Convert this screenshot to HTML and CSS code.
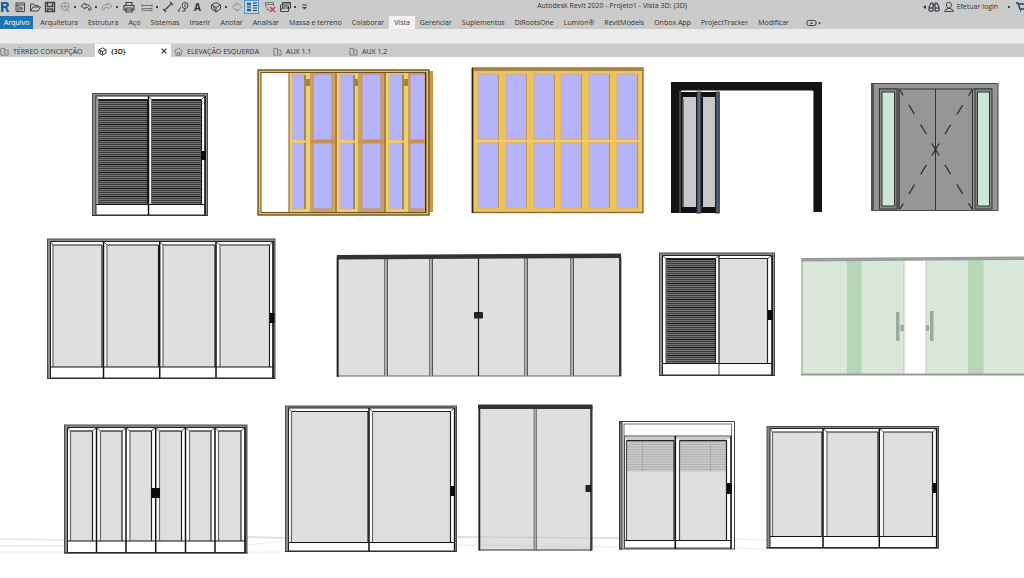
FILE: index.html
```html
<!DOCTYPE html>
<html lang="pt-BR">
<head>
    <meta charset="UTF-8">
    <meta name="viewport" content="width=device-width, initial-scale=1.0">
    <title>Autodesk Revit 2020 - Projeto1</title>
    <link rel="stylesheet" href="styles.css">
</head>
<body>
    <header class="titlebar">
        <div class="quick">
            <svg class="logo" viewBox="0 0 10 12"><path d="M1 1h5q3 0 3 3 0 2-2 2.500L9.500 11H7L5 7H3.500v4H1zM3.500 3v2H6q1-1 0-2z" fill="#1c5f9c"/></svg>
            <button class="tool" aria-label="Início"><svg viewBox="0 0 12 12"><path d="M2 2h8.500v8.500H2zM2 4h8.500M4 4v6M6 6l3 1.500L6 9z"/></svg></button>
            <button class="tool" aria-label="Abrir"><svg viewBox="0 0 12 12"><path d="M1.500 10V3h3l1 1.500H9V6M1.500 10L4 6h7.500L9 10z"/></svg></button>
            <button class="tool" aria-label="Salvar"><svg viewBox="0 0 12 12"><path d="M1.500 1.500h9v9h-9zM3.500 1.500v4h5v-4M3.500 10.500V8h5v2.500" stroke-width="1.400"/></svg></button>
            <button class="tool off" aria-label="Sincronizar"><svg viewBox="0 0 12 12"><circle cx="6" cy="5.500" r="4"/><path d="M2 5.500h8M6 2v4l4 5"/></svg></button>
            <button class="more" aria-label="Opções de sincronizar"></button>
            <button class="tool" aria-label="Desfazer"><svg viewBox="0 0 12 12"><path d="M5 2L1 5l4 3V6.500q4-1 4 3l2-1q0-5-6-5z"/></svg></button>
            <button class="more" aria-label="Lista desfazer"></button>
            <button class="tool off" aria-label="Refazer"><svg viewBox="0 0 12 12"><path d="M7 2l4 3-4 3V6.500q-4-1-4 3l-2-1q0-5 6-5z"/></svg></button>
            <button class="more" aria-label="Lista refazer"></button>
            <button class="tool print" aria-label="Imprimir"><svg viewBox="0 0 12 12"><path d="M3 4V1.500h6V4M1 4.500h10V9H1zM3 7h6v4H3z" stroke-width="1.200"/></svg></button>
            <span class="sep"></span>
            <button class="tool" aria-label="Medir"><svg viewBox="0 0 12 12"><path d="M1 3v3M11 3v3M1 4.500h10M1 7.500h10v2H1z" stroke="#777"/></svg></button>
            <button class="more" aria-label="Opções de medir"></button>
            <button class="tool" aria-label="Cota alinhada"><svg viewBox="0 0 12 12"><path d="M2.500 9.500l7-7M1 8l3 3M8 1l3 3" stroke-width="1.300"/></svg></button>
            <button class="tool" aria-label="Identificador"><svg viewBox="0 0 12 12"><circle cx="8" cy="4.500" r="3"/><path d="M1 10l3-4M8 3v3M8 7.500V10H5M1 10h2"/></svg></button>
            <button class="tool letter" aria-label="Texto">A</button>
            <span class="sep"></span>
            <button class="tool" aria-label="Vista 3D"><svg viewBox="0 0 12 12"><path d="M1.500 4L6 1.500 10.500 4v4L6 11 1.500 8zM1.500 4L6 6.500 10.500 4M6 6.500V11M4 5.500V8l2 2"/></svg></button>
            <button class="more" aria-label="Opções de vista"></button>
            <button class="tool off" aria-label="Corte"><svg viewBox="0 0 12 12"><path d="M6 1.500L10.500 6 6 10.500V8a2.500 2.500 0 1 1 0-4z"/></svg></button>
            <button class="tool on" aria-label="Linhas finas"><svg viewBox="0 0 12 12"><path d="M1 3h4M1 9h4" stroke="#245b96" stroke-width="2.500"/><path d="M7 2h4M7 4.500h4M7 7h4M7 9.500h4M1 6h4" stroke="#333"/></svg></button>
            <span class="sep"></span>
            <button class="tool" aria-label="Fechar janelas ocultas"><svg viewBox="0 0 12 12"><path d="M1.500 6V1.500h8V5M1.500 3.500h8M3 6v3h3" stroke="#777"/><path d="M6 6l5 5M11 6l-5 5" stroke="#cf3448" stroke-width="1.400"/></svg></button>
            <button class="tool" aria-label="Trocar janelas"><svg viewBox="0 0 12 12"><path d="M1.500 8V4h2V1.500h8V7H9.500M3.500 5h6v5.500h-8V8h2zM3.500 7h6M3.500 3h8"/></svg></button>
            <button class="more" aria-label="Opções de janelas"></button>
            <button class="tool" aria-label="Personalizar"><svg viewBox="0 0 12 12"><path d="M2 4h5"/><path d="M2 6h5L4.500 8.500z" fill="#444" stroke="none"/></svg></button>
        </div>
        <div class="title">Autodesk Revit 2020 - Projeto1 - Vista 3D: {3D}</div>
        <div class="account">
            <button class="tool small" aria-label="Recolher"><svg viewBox="0 0 4 12"><path d="M4 4v4L1 6z" fill="#333" stroke="none"/></svg></button>
            <button class="tool" aria-label="Localizar"><svg viewBox="0 0 12 12"><path d="M1 10V6l2-4h2v8zM11 10V6L9 2H7v8zM5 4h2M1 7h4M7 7h4" stroke="#223"/></svg></button>
            <a class="login" href="#"><svg viewBox="0 0 12 12"><path d="M6 1.500q2.500 0 2.500 2.500T6 7 3.500 4 6 1.500M1.500 10.500Q2 8 5 7.500h2q3 .5 3.500 3z"/></svg>Efetuar login</a>
            <button class="more" aria-label="Opções de login"></button>
            <button class="cart" aria-label="Loja"><svg viewBox="0 0 12 12"><path d="M0 2h2l2 6h7l1-5H3M4 10h1M9 10h1" stroke="#27406e" stroke-width="1.400"/></svg></button>
        </div>
    </header>

    <nav class="ribbon">
        <a class="file" href="#">Arquivo</a>
        <a href="#">Arquitetura</a>
        <a href="#">Estrutura</a>
        <a href="#">Aço</a>
        <a href="#">Sistemas</a>
        <a href="#">Inserir</a>
        <a href="#">Anotar</a>
        <a href="#">Analisar</a>
        <a href="#">Massa e terreno</a>
        <a href="#">Colaborar</a>
        <a class="current" href="#">Vista</a>
        <a href="#">Gerenciar</a>
        <a href="#">Suplementos</a>
        <a href="#">DiRootsOne</a>
        <a href="#">Lumion®</a>
        <a href="#">RevitModels</a>
        <a href="#">Onbox App</a>
        <a href="#">ProjectTracker</a>
        <a href="#">Modificar</a>
        <button class="toggle" aria-label="Minimizar faixa"><svg viewBox="0 0 16 8"><rect x="1" y="1.500" width="9" height="5" rx="1.500"/><path d="M4 5l1.500-2L7 5z" fill="#444" stroke="none"/><path d="M12 3.500h3L13.500 5.500z" fill="#333" stroke="none"/></svg></button>
    </nav>
    <div class="panel"></div>

    <div class="views">
        <a class="view wide" href="#"><svg viewBox="0 0 10 10"><path d="M1 1.500h4v2h4V9H1zM5 3.500V7h2"/></svg>TÉRREO CONCEPÇÃO</a>
        <div class="view active"><svg viewBox="0 0 10 10"><path d="M1 3l4-2 4 2v4L5 9 1 7zM1 3l4 2 4-2M5 5v4M3 4v3"/></svg>{3D}<button class="close" aria-label="Fechar"><svg viewBox="0 0 10 10"><path d="M2 2l6 6M8 2L2 8"/></svg></button></div>
        <a class="view wide" href="#"><svg viewBox="0 0 10 10"><path d="M0 5l5-4 5 4M2 5v4h6V5M4 9V6h2v3"/></svg>ELEVAÇÃO ESQUERDA</a>
        <a class="view" href="#"><svg viewBox="0 0 10 10"><path d="M1 1.500h4v2h4V9H1zM5 3.500V7h2"/></svg>AUX 1.1</a>
        <a class="view" href="#"><svg viewBox="0 0 10 10"><path d="M1 1.500h4v2h4V9H1zM5 3.500V7h2"/></svg>AUX 1.2</a>
    </div>

    <main>
        <svg id="model" class="model" viewBox="0 57 1024 521" role="img" aria-label="Vista 3D das portas e janelas"></svg>
    </main>
    <script src="script.js"></script>
</body>
</html>
```

FILE: styles.css
```css
* {
    box-sizing: border-box;
}
body {
    margin: 0;
    background: #fff;
    color: #333;
    font: 7px/10px 'Open Sans', 'Noto Sans', sans-serif;
}
a {
    color: inherit;
    text-decoration: none;
}
button {
    border: 0;
    padding: 0;
    background: none;
}
svg {
    display: block;
    fill: none;
    stroke: #444;
}
.titlebar {
    display: flex;
    height: 16px;
    background: #cbcbcb;
    overflow: hidden;
}
.quick, .account {
    display: flex;
    flex: none;
    align-items: center;
    height: 14px;
}
.logo {
    width: 10px;
    height: 12px;
    margin-right: 2px;
    stroke: none;
}
.tool {
    display: flex;
    justify-content: center;
    width: 15px;
}
.tool svg, .login svg {
    width: 12px;
    height: 12px;
}
.letter {
    color: #333;
    font: bold 10px/14px 'Open Sans', sans-serif;
}
.off {
    opacity: 0.4;
}
.on {
    background: #b9d8f2;
    outline: 1px solid #4f96cf;
    outline-offset: -1px;
    padding: 1px 0;
}
.print {
    margin-left: 1px;
}
.small {
    width: 5px;
}
.tool.small svg {
    width: 4px;
}
.more {
    width: 6px;
    height: 10px;
}
.more::before {
    content: "";
    display: block;
    width: 2px;
    height: 2px;
    margin: auto;
    background: #444;
}
.sep {
    width: 3px;
}
.title {
    flex: 1;
    padding: 1px 10px 0 0;
    text-align: center;
    white-space: nowrap;
}
.login {
    display: flex;
    align-items: center;
    gap: 2px;
    margin: 0 8px 0 1px;
}
.cart {
    width: 12px;
    margin: 0 -4px 0 4px;
}
.ribbon {
    display: flex;
    height: 13px;
    background: #cbcbcb;
    line-height: 14px;
    white-space: nowrap;
}
.ribbon a {
    padding: 0 5px;
}
.ribbon .file {
    margin-right: 2px;
    padding: 0 4px;
    background: #1f74ad;
    color: #fff;
}
.ribbon .current {
    background: #f2f2f2;
}
.toggle {
    margin-left: 12px;
}
.toggle svg {
    width: 16px;
    height: 8px;
}
.panel {
    height: 15px;
    background: #ececec;
    border-bottom: 1px solid #dcdcdc;
}
.views {
    display: flex;
    height: 13px;
    background: #cbcbcb;
    line-height: 13px;
}
.view {
    display: flex;
    align-items: center;
    gap: 4px;
    width: 76px;
    padding: 1px 3px 0;
    white-space: nowrap;
}
.view svg {
    width: 9px;
    height: 9px;
    stroke: #777;
}
.wide {
    width: 99px;
}
.wide:first-child {
    width: 95px;
    padding-left: 0;
}
.active {
    background: #fff;
    color: #111;
    font-weight: 600;
}
.active svg {
    stroke: #333;
}
.view .close {
    margin-left: auto;
}
.close svg {
    width: 8px;
    height: 8px;
    stroke-width: 1.5;
}
.model {
    width: 100%;
    height: auto;
    stroke: none;
}
```

FILE: script.js
```js
const model = document.getElementById('model');
let out = '';

function rect(x1, y1, x2, y2, fill, stroke, width) {
    out += `<rect x="${x1}" y="${y1}" width="${x2 - x1}" height="${y2 - y1}" fill="${fill}"`;
    if (stroke) out += ` stroke="${stroke}" stroke-width="${width || 1}"`;
    out += '/>';
}
function line(x1, y1, x2, y2, color, width, dash) {
    out += `<line x1="${x1}" y1="${y1}" x2="${x2}" y2="${y2}" stroke="${color || '#222'}" stroke-width="${width || 1}"`;
    if (dash) out += ` stroke-dasharray="${dash}"`;
    out += '/>';
}

// horizontal slats of the shutters
function slats(x1, y1, x2, y2) {
    rect(x1, y1, x2, y2, '#757575');
    let i = 0;
    for (let y = y1 + 1; y < y2; y += 2) {
        line(x1, y, x2, y, i % 4 === 0 ? '#141414' : '#3c3c3c', 1);
        i++;
    }
}

// sliding door with aluminium frame, panes = [left, right, isShutter]
function sliding(d) {
    const { x1, y1, x2, y2, left, top, right, rail, paneTop } = d;
    rect(x1 + 0.5, y1 + 0.5, x2 - 0.5, y2 - 0.5, '#8c8c8c', '#4a4a4a');
    rect(left, top, right, y2 - 1, '#fff', '#222');
    d.panes.forEach((p, i) => {
        const a = i ? d.div[i - 1] : left;
        const b = i < d.div.length ? d.div[i] : right;
        line(a, top, p[0], paneTop, '#555');
        if (b - p[1] > 2) line(b, top, p[1], paneTop, '#555');
        if (p[2]) slats(p[0], paneTop, p[1], rail);
        else rect(p[0], paneTop, p[1], rail, '#dfdfe1');
        line(p[0], paneTop, p[1], paneTop, '#222', 1.2);
        line(p[0], paneTop, p[0], rail, '#666', 1.2);
        line(p[1], paneTop, p[1], rail, '#222', 1.2);
    });
    line(left, rail, right, rail, '#111', 1.2);
    d.div.forEach(x => line(x, top, x, y2 - 1, '#111', d.divWidth || 1.5));
    line(right, top, right, y2 - 1, '#111', 1.3);
    line(x1, y2 - 0.5, x2, y2 - 0.5, '#333');
    rect(...d.handle, '#0a0a0a');
}

// shadows on the floor
line(0, 539, 64, 540, '#e9e9e9', 2);
line(0, 546, 64, 546, '#f0f0f0', 2);
line(0, 552, 64, 552, '#f4f4f4', 2);
line(247, 537, 285, 538, '#e2e2e2', 2);
line(247, 545, 285, 541, '#eeeeee');
line(247, 552, 285, 552, '#f0f0f0');
line(456, 537, 619, 538, '#dedede', 2);
line(456, 545, 619, 547, '#e6e6e6');
line(735, 539, 767, 540, '#eeeeee');
line(735, 548, 767, 549, '#f0f0f0');

// row 1: shutter door
sliding({ x1: 92, y1: 93, x2: 208, y2: 216, left: 96, top: 96, right: 205, rail: 204.5, paneTop: 99.5,
    div: [148.5], panes: [[98, 147.5, true], [151.5, 201.5, true]], handle: [201, 151, 206, 160] });

// row 1: folding wooden door, half open
rect(429, 71, 433, 212, '#c99a48');
rect(258, 70, 429, 215, '#e5c063', '#6e531e', 1.4);
rect(261, 72.5, 426, 212.5, '#fff', '#6e531e');
rect(289, 73, 426, 212, '#dfb056');
[[289, 292, 305, 310, 0], [310, 313, 332, 337, 1], [337, 340, 354, 358, 0],
 [358, 362, 381, 386, 1], [386, 389, 403, 408, 0], [408, 410, 425, 427, 1]].forEach(p => {
    rect(p[0], 73, p[3], 212, p[4] ? '#d0a05e' : '#efcf70');
    rect(p[1], 74, p[2], 140, '#b6b4f8', p[4] ? '#c08f68' : '#d8bb79');
    rect(p[1], 143, p[2], 209, '#b6b4f8', p[4] ? '#c08f68' : '#d8bb79');
    if (!p[4]) {
        rect(p[2] - 1, 75, p[2] + 1, 209, '#9f8a5c');
        rect(p[2] + 1, 79, p[2] + 6, 86, '#a38342');
    } else {
        line(p[3] - 1, 73, p[3] - 1, 212, '#8f6222');
    }
    line(p[0], 141.5, p[3] - 2, 141.5, p[4] ? '#c48d4d' : '#efcf70', 2);
});
line(289, 73, 289, 212, '#7b571d');
line(425.5, 73, 425.5, 212, '#493829');

// row 1: folding wooden door, closed
rect(472.5, 68, 643, 212.5, '#ebc465', '#8a6b2c', 1.4);
line(472.5, 68, 472.5, 213, '#2d220d', 1.6);
line(474, 70, 642, 70, '#5a4417', 1.2);
[[478, 498], [506, 526], [534, 554], [561, 581], [589, 609], [617, 637]].forEach(p => {
    rect(p[0], 74, p[1], 139, '#b6b4fa', '#d7ae74');
    rect(p[0], 143, p[1], 208, '#b6b4fa', '#d7ae74');
    line(p[1] + 0.5, 74, p[1] + 0.5, 208, '#bd9a5a');
    if (p[1] < 630) line(p[1] + 4, 72, p[1] + 4, 210, '#f2c53f', 1.5);
});
line(475, 141, 641, 141, '#f0cc74', 2);

// row 1: black folding door
rect(671, 82, 822, 90.5, '#141414');
rect(671, 82, 681, 213, '#141414');
rect(813, 82, 822, 212, '#141414');
line(813.5, 91, 813.5, 212, '#777');
line(680, 91, 680, 213, '#777');
rect(681, 92, 702, 213, '#111');
rect(683, 97, 696, 207, '#c9c9cb');
line(683, 99, 683, 207, '#555', 1.5);
rect(697, 92, 701, 213, '#5e6880', '#272d3a');
rect(702, 92, 719.5, 213, '#111');
rect(703, 97, 715, 207, '#c9c9cb');
rect(716, 92, 719, 213, '#5e6880', '#272d3a');

// row 1: gray double door
rect(871.5, 83.5, 998, 210.5, '#969696', '#4a4a4a');
rect(871, 84, 874, 211, '#555');
line(879, 89, 992, 89, '#333');
[[879.5, 897, 882, 894.5], [975, 992, 977.5, 989.5]].forEach(p => {
    rect(p[0], 89, p[1], 209, '#888', '#333');
    rect(p[2], 92, p[3], 206, '#cfe5d8', '#333');
});
rect(897, 89, 900, 209, '#555');
line(972.5, 89, 972.5, 210, '#333');
line(935.5, 89, 935.5, 210, '#333');
[[900, 90], [972, 90], [900, 209], [972, 209]].forEach(p =>
    line(935.5, 149.5, p[0], p[1], '#2b2b2b', 1.2, '7 11 11 12 11 11 7'));

// row 2
sliding({ x1: 47, y1: 238.5, x2: 275.5, y2: 379, left: 50.5, top: 241.5, right: 273, rail: 367, paneTop: 245,
    div: [103.5, 159.7, 216], panes: [[53, 102], [107, 158.5], [163, 215], [220, 269.5]], handle: [270, 313, 274.5, 323] });

rect(337, 257, 621, 376, '#dfdfe1', '#666');
[386, 431, 526, 572].forEach(x => {
    rect(x - 1.5, 258, x + 1.5, 376, '#ababab');
    line(x - 1.5, 258, x - 1.5, 376, '#777');
    line(x + 1.5, 258, x + 1.5, 376, '#555');
});
line(478.5, 258, 478.5, 376, '#222', 1.2);
line(337.8, 256, 337.8, 377, '#222', 1.7);
line(620, 256, 620, 376, '#222', 1.7);
out += '<path d="M337 255L621 253.500V258L337 259.500z" fill="#333"/>';
out += '<rect x="474" y="312" width="9" height="6.500" rx="1" fill="#222"/>';

sliding({ x1: 659, y1: 252.5, x2: 775, y2: 376, left: 662.5, top: 255.5, right: 772, rail: 363.5, paneTop: 258.5,
    div: [719], divWidth: 0.8, panes: [[666, 715.5, true], [719, 767.5]], handle: [768, 310, 773, 320] });

// row 2: green glass
rect(802, 259, 904, 374, '#d9e8d9');
rect(926, 259, 1024, 374, '#d9e8d9');
rect(847, 259, 861.5, 374, '#b7d6b7');
rect(968, 259, 983.5, 374, '#b7d6b7');
line(802, 258, 802, 375, '#aab5aa', 1.5);
line(904, 261, 904, 374, '#bccbbc');
line(926, 261, 926, 374, '#bccbbc');
out += '<path d="M801 258L1024 256.500V260L801 261.500z" fill="#9b9f9b"/>';
line(801, 374.5, 1024, 374.5, '#999', 1.8);
rect(896, 312, 899.5, 341, '#9fa7a0');
rect(900.5, 325, 904, 331, '#9fa7a0');
rect(930, 311, 933.5, 341, '#9fa7a0');
rect(926, 325, 929, 331, '#9fa7a0');

// row 3
sliding({ x1: 64, y1: 424.5, x2: 247.5, y2: 553.5, left: 67.5, top: 427.5, right: 245, rail: 541, paneTop: 431,
    div: [96.5, 126, 155.7, 185.5, 215], panes: [[70.5, 92.5], [100.5, 122], [130, 151.5], [159.5, 181.5], [189.5, 211], [218.5, 241]],
    handle: [151.5, 488, 160, 498] });

sliding({ x1: 285, y1: 405.5, x2: 457, y2: 552, left: 288.5, top: 408, right: 454.5, rail: 542.5, paneTop: 411.5,
    div: [369], panes: [[291.5, 368], [372.5, 450.5]], handle: [450.5, 486, 455, 496] });

rect(479, 407, 592, 550, '#dfdfe1', '#333');
line(480, 537, 591, 538, '#c4c4c6');
line(480, 545, 591, 547, '#cfcfd1');
rect(534, 408, 536.5, 550, '#ababab', '#666', 0.8);
line(479.5, 407, 479.5, 550.5, '#222', 1.5);
line(591, 407, 591, 550.5, '#222', 1.5);
rect(478, 404.5, 592.5, 409, '#333');
out += '<rect x="585.500" y="485" width="6" height="7" rx="1" fill="#222"/>';

// row 3: window with roller blind
rect(619.5, 421.5, 734.5, 549, '#fff', '#444');
rect(619.5, 422, 622, 549, '#888', '#333');
rect(624, 424, 731.5, 548, '#fff', '#777');
rect(624.5, 436, 731, 548, '#fff', '#444');
line(624, 438, 731, 438, '#999');
[[626.5, 674], [679.5, 726.5]].forEach(p => {
    rect(p[0], 440.5, p[1], 540.5, '#dfdfe1');
    rect(p[0], 440.5, p[1], 471.5, '#c9c9cb');
    for (let y = 442; y < 471; y += 2.5) line(p[0], y, p[1], y, '#adadad', 0.8);
    line(p[0], 440.5, p[1], 440.5, '#222', 1.3);
    line(p[0], 440.5, p[0], 540.5, '#444', 1.2);
    line(p[1], 440.5, p[1], 540.5, '#222', 1.2);
});
line(642.5, 442, 642.5, 471, '#aaa');
line(710.5, 442, 710.5, 471, '#aaa');
line(624, 540.5, 731, 540.5, '#111', 1.2);
line(675.3, 436, 675.3, 549, '#111', 1.6);
line(731, 436, 731, 549, '#222', 1.4);
rect(727, 483, 732, 494, '#0a0a0a');

sliding({ x1: 766.5, y1: 426, x2: 939, y2: 548.5, left: 770, top: 428.5, right: 936.5, rail: 536.5, paneTop: 432,
    div: [823, 879.3], panes: [[772.5, 822], [827, 878], [883.5, 932.5]], handle: [932.5, 483, 937, 493] });

model.innerHTML = out;
```
